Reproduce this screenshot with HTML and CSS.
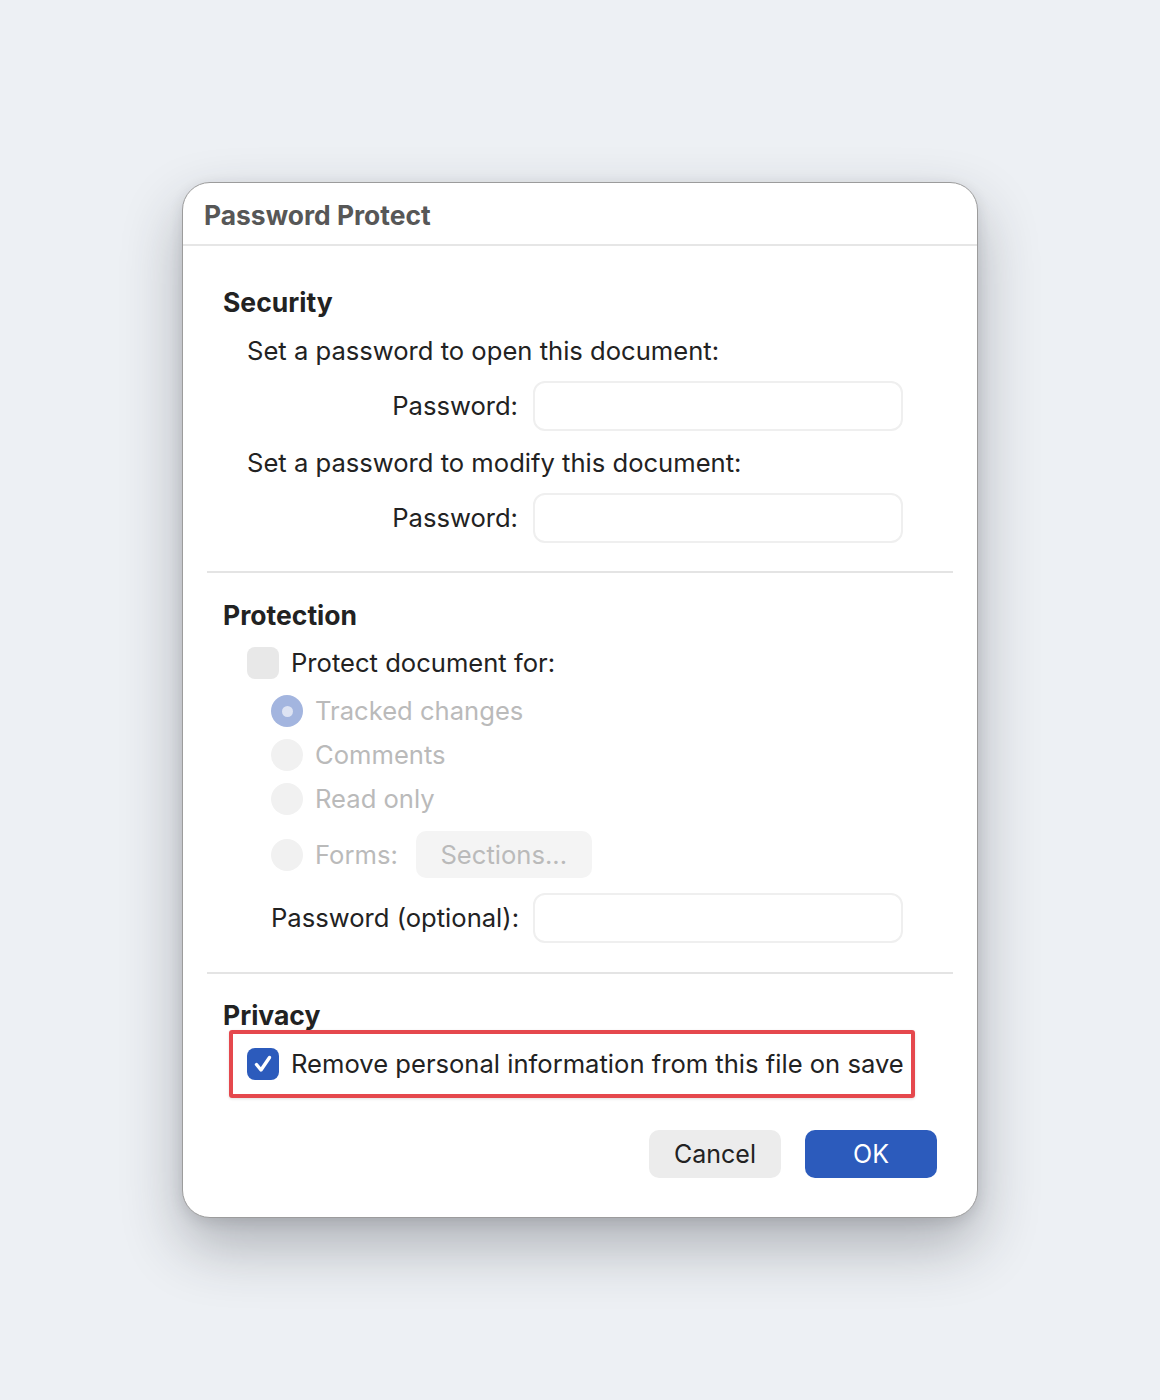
FILE: index.html
```html
<!DOCTYPE html>
<html lang="en">
<head>
<meta charset="utf-8">
<title>Password Protect</title>
<link rel="stylesheet" href="styles.css">
</head>
<body>
<div class="dialog">
  <div class="header">Password Protect</div>
  <div class="body">
    <section class="section security">
      <h2 class="heading">Security</h2>
      <div class="line sub">Set a password to open this document:</div>
      <div class="field-row">
        <label class="field-label">Password:</label>
        <div class="input"></div>
      </div>
      <div class="line sub gap-top">Set a password to modify this document:</div>
      <div class="field-row">
        <label class="field-label">Password:</label>
        <div class="input"></div>
      </div>
    </section>
    <div class="sep"></div>
    <section class="section protection">
      <h2 class="heading">Protection</h2>
      <div class="check-row">
        <span class="checkbox off"></span>
        <span class="text">Protect document for:</span>
      </div>
      <div class="radios">
        <div class="radio-row"><span class="radio on"><span class="dot"></span></span><span class="text dim">Tracked changes</span></div>
        <div class="radio-row"><span class="radio"></span><span class="text dim">Comments</span></div>
        <div class="radio-row"><span class="radio"></span><span class="text dim">Read only</span></div>
        <div class="radio-row forms"><span class="radio"></span><span class="text dim">Forms:</span><span class="sections-btn">Sections...</span></div>
      </div>
      <div class="field-row opt">
        <label class="field-label">Password (optional):</label>
        <div class="input"></div>
      </div>
    </section>
    <div class="sep"></div>
    <section class="section privacy">
      <h2 class="heading">Privacy</h2>
      <div class="highlight">
        <span class="checkbox on">
          <svg viewBox="0 0 32 32" width="32" height="32"><path d="M9.5 16.5 L14 22 L22.5 9.5" fill="none" stroke="#fff" stroke-width="3.4" stroke-linecap="round" stroke-linejoin="round"/></svg>
        </span>
        <span class="text">Remove personal information from this file on save</span>
      </div>
    </section>
    <div class="buttons">
      <button class="btn cancel">Cancel</button>
      <button class="btn ok">OK</button>
    </div>
  </div>
</div>
</body>
</html>
```
FILE: styles.css
```css
* { box-sizing: border-box; }
html, body { margin: 0; padding: 0; }
body {
  width: 1160px;
  height: 1400px;
  background: #edf0f4;
  display: flex;
  align-items: center;
  justify-content: center;
  font-family: Inter, "Open Sans", "Liberation Sans", sans-serif;
  color: #222;
}
.dialog {
  width: 796px;
  height: 1036px;
  background: #fff;
  border: 1px solid #9c9c9c;
  border-radius: 28px;
  box-shadow: 0 28px 60px rgba(40, 44, 52, 0.32), 0 4px 14px rgba(40, 44, 52, 0.12);
  display: flex;
  flex-direction: column;
}
.header {
  height: 63px;
  flex: none;
  padding-left: 21px;
  display: flex;
  align-items: center;
  font-size: 26.4px;
  font-weight: 700;
  color: #575757;
  border-bottom: 2px solid #e6e6e6;
  padding-top: 2px;
}
.body {
  padding: 0 24px 39px;
  display: flex;
  flex-direction: column;
}
.section { padding: 0 16px; display: flex; flex-direction: column; }
.heading {
  margin: 0;
  font-size: 26.5px;
  font-weight: 700;
  line-height: 30px;
  height: 30px;
}
.security { padding-top: 41px; padding-bottom: 28px; }
.protection { padding-top: 27px; padding-bottom: 29px; }
.privacy { padding-top: 26px; }
.line, .text {
  font-size: 25.6px;
  line-height: 30px;
}
.sub { padding-left: 24px; margin-top: 19px; }
.sub.gap-top { margin-top: 17px; }
.field-row {
  display: grid;
  grid-template-columns: 271px 370px;
  column-gap: 15px;
  align-items: center;
  margin-top: 15px;
  padding-left: 24px;
}
.field-label {
  font-size: 25.6px;
  line-height: 30px;
  text-align: right;
  padding-left: 24px;
  white-space: nowrap;
}
.input {
  height: 50px;
  border: 2px solid #efefef;
  border-radius: 12px;
  background: #fff;
}
.sep { height: 2px; background: #e4e4e4; flex: none; }
.check-row {
  display: flex;
  align-items: center;
  gap: 12px;
  margin-top: 17px;
  padding-left: 24px;
  height: 32px;
}
.checkbox {
  width: 32px;
  height: 32px;
  border-radius: 8px;
  flex: none;
  display: flex;
}
.checkbox.off { background: #e8e8e8; }
.checkbox.on { background: #2c5bbc; }
.radios {
  display: flex;
  flex-direction: column;
  gap: 12px;
  margin-top: 16px;
  padding-left: 48px;
}
.radio-row {
  display: flex;
  align-items: center;
  gap: 12px;
  height: 32px;
}
.radio-row.forms { height: 47px; margin-top: 4px; }
.radio {
  width: 32px;
  height: 32px;
  border-radius: 50%;
  background: #f1f1f1;
  flex: none;
  display: flex;
  align-items: center;
  justify-content: center;
}
.radio.on { background: #a3b5df; }
.radio .dot { width: 11px; height: 11px; border-radius: 50%; background: #dde3f3; }
.dim { color: #bababa; }
.sections-btn {
  margin-left: 6px;
  width: 176px;
  height: 47px;
  border-radius: 10px;
  background: #f4f4f4;
  color: #bababa;
  font-size: 25.6px;
  display: flex;
  align-items: center;
  justify-content: center;
}
.field-row.opt { margin-top: 15px; }
.highlight {
  margin-left: 6px;
  margin-right: 22px;
  border: 4px solid #e5484d;
  border-radius: 3px;
  height: 68px;
  display: flex;
  align-items: center;
  gap: 12px;
  padding-left: 14px;
  white-space: nowrap;
  box-shadow: 0 1px 3px rgba(0,0,0,0.12);
}
.buttons {
  display: flex;
  justify-content: flex-end;
  gap: 24px;
  margin-top: 32px;
  padding-right: 16px;
}
.btn {
  width: 132px;
  height: 48px;
  border: none;
  border-radius: 10px;
  font-family: inherit;
  font-size: 25px;
  padding: 0;
}
.cancel { background: #ececec; color: #222; }
.ok { background: #2c5bbc; color: #fff; }
```
